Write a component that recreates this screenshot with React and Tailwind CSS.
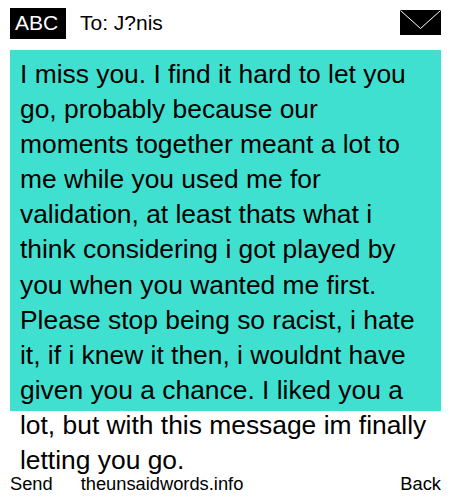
import React from 'react';

const lines = [
  "I miss you. I find it hard to let you",
  "go, probably because our",
  "moments together meant a lot to",
  "me while you used me for",
  "validation, at least thats what i",
  "think considering i got played by",
  "you when you wanted me first.",
  "Please stop being so racist, i hate",
  "it, if i knew it then, i wouldnt have",
  "given you a chance. I liked you a",
  "lot, but with this message im finally",
  "letting you go.",
];

const App = () => {
  return (
    <div className="w-[450px] h-[500px] bg-white text-black overflow-hidden font-['Liberation_Sans',sans-serif] flex flex-col pl-[10px] pr-[9px]">
      {/* cabecera */}
      <div className="h-[50px] pt-2 flex items-start shrink-0">
        <div className="w-[56px] h-[31px] bg-black text-white text-[21px] leading-[30px] pr-[3px] text-center">ABC</div>
        <div className="ml-[14px] text-[21px] leading-[30px]">To: J?nis</div>
        <svg className="ml-auto mt-[2px]" width="41" height="25" viewBox="0 0 41 25">
          <rect width="41" height="25" fill="#000" />
          <path d="M0.5 0.5 L20.5 18.5 L40.5 0.5" fill="none" stroke="#fff" strokeWidth="1" />
        </svg>
      </div>
      {/* mensaje */}
      <div className="h-[361px] shrink-0 bg-[#40e0d0] px-[10px] pt-[7px] text-[26.4px] leading-[35.1px] whitespace-nowrap">
        {lines.map((line) => (
          <div key={line}>{line}</div>
        ))}
      </div>
      {/* pie */}
      <div className="mt-auto mb-[6px] flex text-[18.3px] leading-[21px]">
        <span>Send</span>
        <span className="ml-[28px]">theunsaidwords.info</span>
        <span className="ml-auto">Back</span>
      </div>
    </div>
  );
};

export default App;
